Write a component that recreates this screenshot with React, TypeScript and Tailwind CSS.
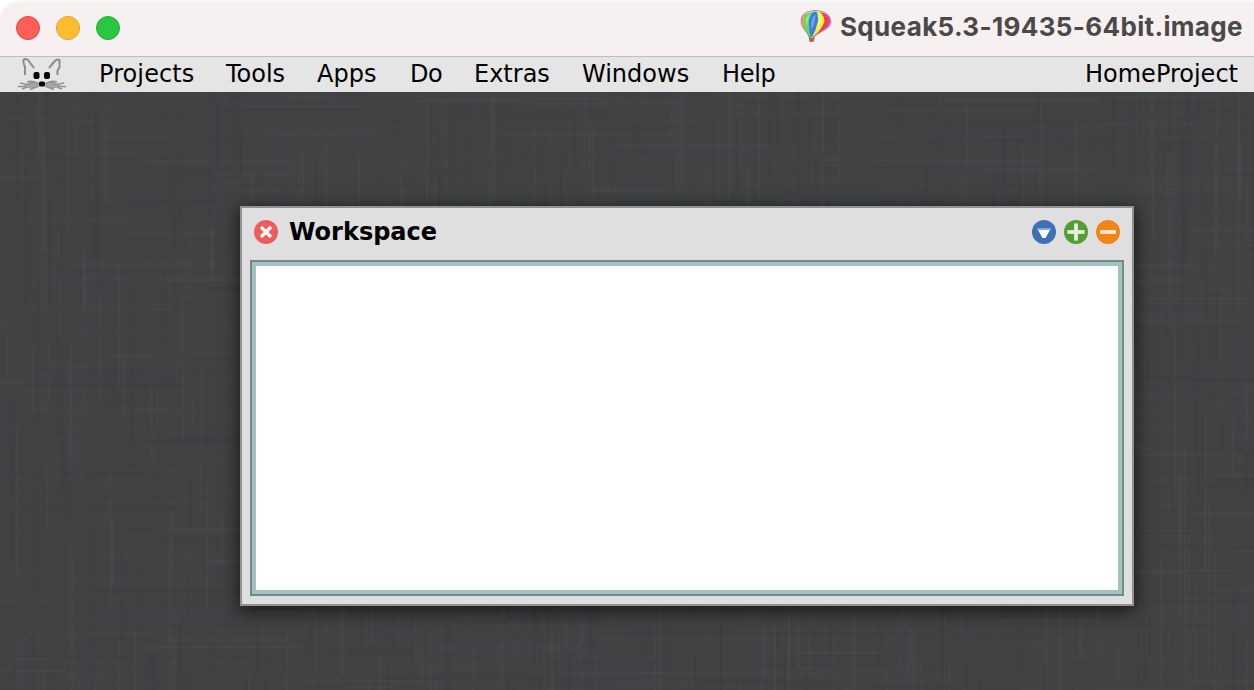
const menus = [
  { label: 'Projects', box: 'w-[127px]', spacing: 'tracking-[0.1px]' },
  { label: 'Tools', box: 'w-[91px]', spacing: 'tracking-[0px]' },
  { label: 'Apps', box: 'w-[93px]', spacing: 'tracking-[0px]' },
  { label: 'Do', box: 'w-[64px]', spacing: 'tracking-[-0.5px]' },
  { label: 'Extras', box: 'w-[108px]', spacing: 'tracking-[0px]' },
  { label: 'Windows', box: 'w-[140px]', spacing: 'tracking-[0px]' },
  { label: 'Help', box: 'w-[60px]', spacing: 'tracking-[-0.3px]' },
];

type Thread = { x: number; y: number; w: number; h: number; fill: string; o: number };

// Seeded generator, so the weave is the same on every render.
function weave(): Thread[] {
  let seed = 7919;
  const rnd = () => {
    seed = (seed * 16807) % 2147483647;
    return seed / 2147483647;
  };
  const out: Thread[] = [];
  for (let i = 0; i < 1900; i++) {
    const vertical = rnd() < 0.55;
    const len = 30 + Math.floor(rnd() * 150);
    const thick = rnd() < 0.7 ? 2 : rnd() < 0.8 ? 4 : 10;
    const light = rnd() < 0.5;
    out.push({
      x: Math.floor(rnd() * 670) * 2 - 60,
      y: Math.floor(rnd() * 340) * 2 - 60,
      w: vertical ? thick : len,
      h: vertical ? len : thick,
      fill: light ? '#606366' : '#333436',
      o: (thick > 4 ? 0.02 : 0.03) + rnd() * (thick > 4 ? 0.04 : 0.08),
    });
  }
  return out;
}

const threads = weave();

function Linen() {
  return (
    <svg className="absolute inset-0" width="1254" height="598" viewBox="0 0 1254 598" shapeRendering="crispEdges">
      {threads.map((t, i) => (
        <rect key={i} x={t.x} y={t.y} width={t.w} height={t.h} fill={t.fill} opacity={t.o} />
      ))}
    </svg>
  );
}

function Balloon() {
  const outline =
    'M801 21 C801 14 807 10.500 816 10.500 C825 10.500 831 15 831 22 C831 29 820 31 814 37 L809 37 C807 31 801 28 801 21Z';
  return (
    <svg className="shrink-0" width="32" height="34" viewBox="800 9 32 34">
      <clipPath id="envelope">
        <path d={outline} />
      </clipPath>
      <g clipPath="url(#envelope)">
        <rect x="800" y="9" width="32" height="29" fill="#d95be6" />
        <path d="M816 10 Q829 12 829.500 22 Q827 29 812 37 H808Z" fill="#ee4340" />
        <path d="M816 10 Q824 13 824.500 21 Q822 30 812.500 37 H808Z" fill="#e9f545" />
        <path d="M816 10 Q818.500 15 818 21 Q816 30 812 37 H808 L800 9Z" fill="#3c78e6" />
        <path d="M816 10 Q810 14 809 21 Q808.500 30 811 37 H806 L799 20 L802 9Z" fill="#5bdc5c" />
        <path d="M816 10 Q804 13 803.500 21 Q804 29 809.500 37 H806 L798 20 L802 9Z" fill="#ee9672" />
        <path d="M815 14 Q811.500 18 811 23 L811.500 30 Q815 24 815.500 17Z" fill="#86b3f6" opacity="0.7" />
        <path d="M819 14 Q821.500 19 820.500 23 L817 29 Q819.500 21 818.500 14Z" fill="#fbffc4" opacity="0.7" />
        <path d="M811 13 Q806 16 805.500 22 L807 27 Q807 19 811 13Z" fill="#b2f3ac" opacity="0.7" />
        <path d="M800 18 Q806 9 816 10 Q826 9 831 18 Q826 12 816 12 Q807 12 800 18Z" fill="#c4dadd" opacity="0.8" />
      </g>
      <path d={outline} fill="none" stroke="#707370" strokeWidth="0.600" opacity="0.600" />
      <path d="M809.500 37 L810 39 M814 37 L813.500 39" stroke="#6b4d3a" strokeWidth="0.800" />
      <path d="M809.300 38 H814 L813.500 41.500 H809.800Z" fill="#c4674d" stroke="#694638" strokeWidth="0.500" />
    </svg>
  );
}

function Mouse() {
  return (
    <svg className="shrink-0" width="50" height="35" viewBox="17 57 50 35">
      <g fill="none" stroke="#8c8c8c" strokeWidth="2" strokeLinejoin="round">
        <path d="M25 75 V67 Q23 63 23.500 60 Q25 58 28 60 L34 68" />
        <path d="M49 68 L54 62 Q57 58.500 59.500 60 V67 L57.500 71 V75" />
      </g>
      <g fill="none" stroke="#858585" strokeWidth="1.600" opacity="0.850">
        <path d="M20 83 L25 84 L31 85 H38 M27 82 Q33 80 39 84 M18 86.500 H24 L31 83 H37" />
        <path d="M22 89 L27 87 H38 M30 89.500 L34 88 L39 86" />
        <path d="M64 83 L59 84 L53 85 H46 M57 82 Q51 80 45 84 M66 86.500 H60 L53 83 H47" />
        <path d="M62 89 L57 87 H46 M54 89.500 L50 88 L45 86" />
      </g>
      <g fill="#050505">
        <rect x="33.500" y="72" width="6" height="7" rx="2" />
        <rect x="44" y="72" width="6" height="7" rx="2" />
        <rect x="39" y="81.500" width="6" height="5" rx="1.500" />
      </g>
    </svg>
  );
}

function CloseIcon() {
  return (
    <svg width="24" height="24" viewBox="0 0 24 24">
      <circle cx="12" cy="12" r="12" fill="#ed5b5c" />
      <path d="M7 7 L17 17 M17 7 L7 17" stroke="#fff4f3" strokeWidth="3.400" />
    </svg>
  );
}

function MenuIcon() {
  return (
    <svg width="24" height="24" viewBox="0 0 24 24">
      <circle cx="12" cy="12" r="12" fill="#3e70b8" />
      <path d="M4.500 8 H19.500 L18 10.500 H6Z" fill="#86a9d6" />
      <path d="M6 10 H18 L13.500 18 H10.500Z" fill="#ffffff" />
    </svg>
  );
}

function ExpandIcon() {
  return (
    <svg width="24" height="24" viewBox="0 0 24 24">
      <circle cx="12" cy="12" r="12" fill="#529e30" />
      <path d="M3 12 H21 M12 3 V21" stroke="#a9cd97" strokeWidth="4" />
      <path d="M4 12 H20 M12 4 V20" stroke="#e5f0df" strokeWidth="3.500" />
    </svg>
  );
}

function CollapseIcon() {
  return (
    <svg width="24" height="24" viewBox="0 0 24 24">
      <circle cx="12" cy="12" r="12" fill="#f28518" />
      <path d="M4 12 H20" stroke="#fce2c8" strokeWidth="4" />
    </svg>
  );
}

export default function App() {
  return (
    <div className="flex h-[690px] w-[1254px] flex-col overflow-hidden bg-white">
      <header className="flex h-[57px] shrink-0 items-start justify-between rounded-tl-[20px] border-t-2 border-b border-t-[#faf8f8] border-b-[#c1bdbe] bg-[#f6f0f0] pr-3 pl-4">
        <div className="flex gap-4 pt-[14px]">
          <span className="size-6 rounded-full border border-[#e0443e] bg-[#ff5f57]" />
          <span className="size-6 rounded-full border border-[#dea035] bg-[#febc2e]" />
          <span className="size-6 rounded-full border border-[#24ad38] bg-[#28c840]" />
        </div>
        <div className="flex items-start gap-2 pt-[7px]">
          <Balloon />
          <h1 className="w-[402px] pt-[1px] font-['Inter',sans-serif] text-[26px] leading-[34px] font-bold tracking-[0.34px] whitespace-nowrap text-[#4a4848]">
            Squeak5.3-19435-64bit.image
          </h1>
        </div>
      </header>

      <nav className="flex h-[35px] shrink-0 items-start bg-[#e5e5e5] pr-4 pl-[17px] font-['DejaVu_Sans',sans-serif] text-2xl leading-[35px] text-black">
        <Mouse />
        <div className="ml-[32px] flex">
          {menus.map((m) => (
            <span key={m.label} className={`${m.box} ${m.spacing} shrink-0 whitespace-nowrap`}>
              {m.label}
            </span>
          ))}
        </div>
        <span className="ml-auto">HomeProject</span>
      </nav>

      <main className="relative flex h-[598px] shrink-0 bg-[#414244] pt-[114px] pl-[240px]">
        <Linen />
        <section className="relative flex h-[400px] w-[894px] flex-col border-2 border-[#919191] bg-[#dfdfdf] px-2 pb-2 shadow-[0_4px_16px_2px_rgba(0,0,0,0.6)]">
          <div className="flex h-[52px] shrink-0 items-start pt-3 pr-1 pl-1">
            <CloseIcon />
            <h2 className="ml-[11px] font-['DejaVu_Sans',sans-serif] text-2xl leading-[24px] font-bold whitespace-nowrap text-black">
              Workspace
            </h2>
            <div className="ml-auto flex gap-2">
              <MenuIcon />
              <ExpandIcon />
              <CollapseIcon />
            </div>
          </div>
          <div className="flex-1 border-2 border-[#6e8d8a]">
            <div className="h-full border-4 border-[#a6c0be] bg-white" />
          </div>
        </section>
      </main>
    </div>
  );
}
